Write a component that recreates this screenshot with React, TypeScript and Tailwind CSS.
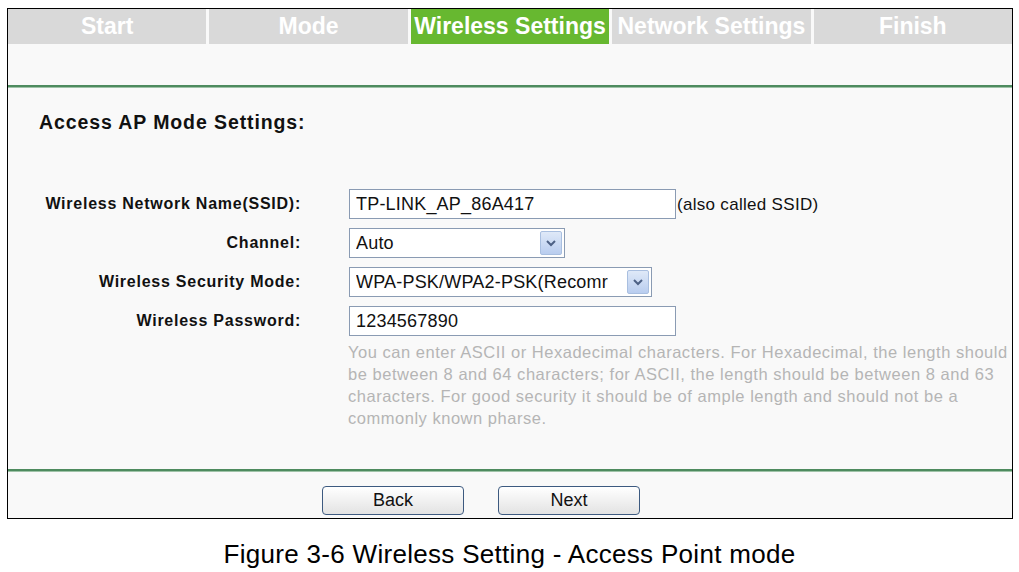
const TABS = ['Start', 'Mode', 'Wireless Settings', 'Network Settings', 'Finish'];

const ROWS: { label: string; kind: 'text' | 'select'; value: string; width: string }[] = [
  { label: 'Wireless Network Name(SSID):', kind: 'text', value: 'TP-LINK_AP_86A417', width: 'w-[327px]' },
  { label: 'Channel:', kind: 'select', value: 'Auto', width: 'w-[216px]' },
  { label: 'Wireless Security Mode:', kind: 'select', value: 'WPA-PSK/WPA2-PSK(Recomr', width: 'w-[303px]' },
  { label: 'Wireless Password:', kind: 'text', value: '1234567890', width: 'w-[327px]' },
];

const HELP = [
  'You can enter ASCII or Hexadecimal characters. For Hexadecimal, the length should',
  'be between 8 and 64 characters; for ASCII, the length should be between 8 and 63',
  'characters. For good security it should be of ample length and should not be a',
  'commonly known pharse.',
];

function Chevron() {
  return (
    <div className="w-[22px] h-[24px] mr-[2px] shrink-0 rounded-[2px] border border-[#a9bfe0] bg-gradient-to-b from-[#dfe9f8] to-[#b9cdef] flex items-center justify-center">
      <svg width="10" height="8" viewBox="0 0 10 8">
        <path d="M1 2 L5 6 L9 2" fill="none" stroke="#4d6185" strokeWidth="2" />
      </svg>
    </div>
  );
}

export default function App() {
  return (
    <div className="w-[1019px] h-[572px] bg-white font-['Liberation_Sans',Arial,sans-serif] pt-[8px] pl-[7px]">
      <div className="w-[1006px] h-[511px] border-[1.5px] border-black bg-[#f9f9f9] flex flex-col">
        <div className="flex gap-[3px] h-[35px] bg-[#f9f9f9]">
          {TABS.map(t => (
            <div
              key={t}
              className={`flex-1 flex items-center justify-center text-[23px] font-bold text-white ${t === 'Wireless Settings' ? 'bg-[#67b830]' : 'bg-[#d9d9d9]'}`}
            >
              {t}
            </div>
          ))}
        </div>
        <div className="h-[41px]" />
        <div className="h-[3px] bg-[#4e8b5f] border-b border-[#9fc3a8]" />
        <div className="flex-1 flex flex-col">
          <h2 className="pl-[31px] pt-[20px] text-[19.5px] font-bold tracking-[0.9px] text-[#111]">Access AP Mode Settings:</h2>
          <div className="mt-[52px] flex flex-col gap-[9px]">
            {ROWS.map(r => (
              <div key={r.label} className="flex items-center">
                <div className="w-[293px] text-right text-[16px] font-bold tracking-[0.75px] text-[#111]">{r.label}</div>
                <div className="ml-[48px] flex items-center">
                  <div className={`${r.width} h-[30px] border border-[#8a9bb3] bg-white flex items-center justify-between pl-[6px] text-[18px] tracking-[0.2px] text-[#111]`}>
                    <span className="whitespace-nowrap overflow-hidden">{r.value}</span>
                    {r.kind === 'select' && <Chevron />}
                  </div>
                  {r.label.startsWith('Wireless Network') && (
                    <span className="ml-[1px] text-[17px] tracking-[0.3px] text-[#111]">(also called SSID)</span>
                  )}
                </div>
              </div>
            ))}
          </div>
          <div className="ml-[340px] mt-[5px] text-[16.5px] leading-[22px] tracking-[0.52px] text-[#b5b5b5]">
            {HELP.map(l => (
              <div key={l} className="whitespace-nowrap">{l}</div>
            ))}
          </div>
        </div>
        <div className="h-[3px] bg-[#4e8b5f] border-b border-[#9fc3a8]" />
        <div className="h-[46px] flex items-start justify-center gap-[34px] pt-[14px] pr-[58px]">
          {['Back', 'Next'].map(b => (
            <button
              key={b}
              className="w-[142px] h-[29px] rounded-[4px] border border-[#3d5a80] bg-gradient-to-b from-white to-[#e3e3e3] text-[18px] text-[#111]"
            >
              {b}
            </button>
          ))}
        </div>
      </div>
      <div className="mt-[16px] pr-[7px] text-center text-[26px] tracking-[0.3px] text-black">Figure 3-6 Wireless Setting - Access Point mode</div>
    </div>
  );
}
